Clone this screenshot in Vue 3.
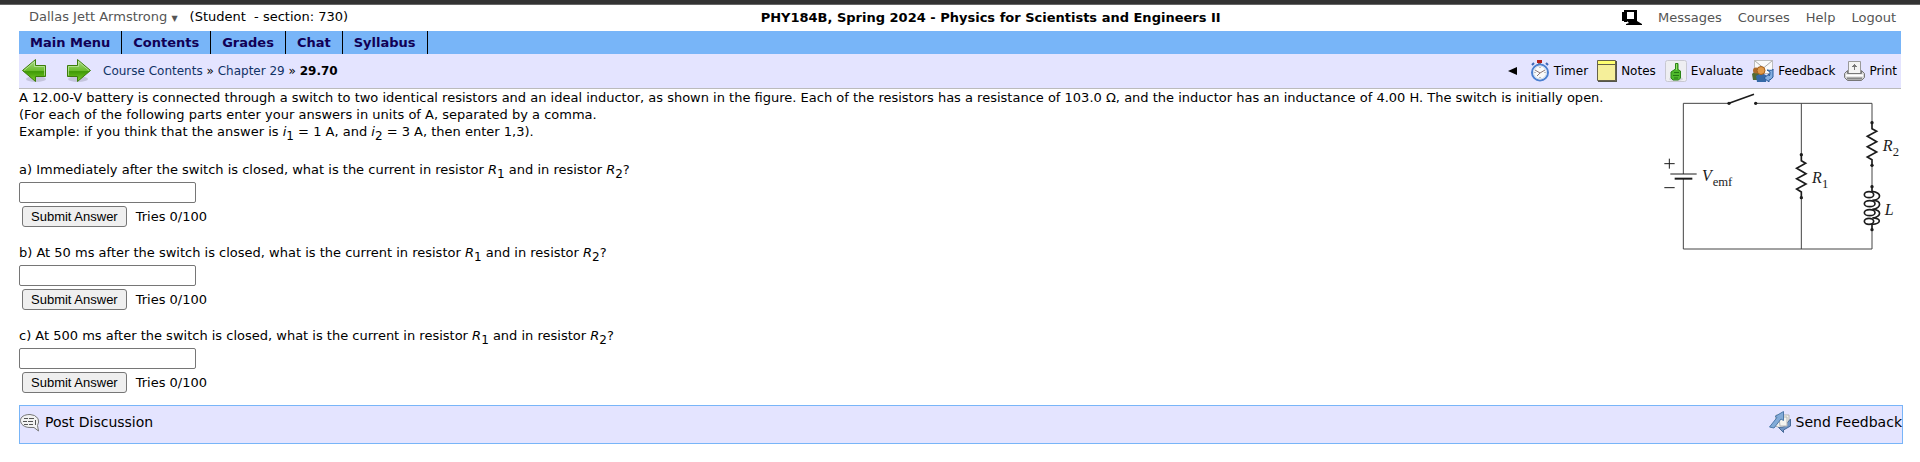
<script setup>
import { ref } from 'vue'

const menu = ['Main Menu', 'Contents', 'Grades', 'Chat', 'Syllabus']
const questions = [
  { id: 'a', lead: 'a) Immediately after the switch is closed, what is the current in resistor' },
  { id: 'b', lead: 'b) At 50 ms after the switch is closed, what is the current in resistor' },
  { id: 'c', lead: 'c) At 500 ms after the switch is closed, what is the current in resistor' }
]
const answers = ref({ a: '', b: '', c: '' })
</script>

<template>
  <div class="page">
    <header class="top">
      <div class="user">
        <a href="#" class="muted">Dallas Jett Armstrong <span class="caret">▼</span></a>
        <span>(Student &nbsp;- section: 730)</span>
      </div>
      <h1>PHY184B, Spring 2024 - Physics for Scientists and Engineers II</h1>
      <nav class="account">
        <svg width="20" height="15" viewBox="0 0 20 15" aria-hidden="true">
          <path d="M0 2h2v9H0zM2 0h13v11H2z" />
          <path d="M5 2h7v7H5z" fill="#fff" />
          <path d="M5 11h10l5 3v1H4v-1l3-1z" />
          <path d="M2 11h3v1H2zM8 10h2v1H8z" />
        </svg>
        <a href="#">Messages</a>
        <a href="#">Courses</a>
        <a href="#">Help</a>
        <a href="#">Logout</a>
      </nav>
    </header>

    <nav class="menu">
      <a v-for="m in menu" :key="m" href="#">{{ m }}</a>
    </nav>

    <div class="crumbs">
      <a href="#" class="arrow" aria-label="Previous">
        <svg width="26" height="26" viewBox="0 0 26 26">
          <defs>
            <linearGradient id="green" x1="0" y1="0" x2="0" y2="1">
              <stop offset="0" stop-color="#a9d98a" />
              <stop offset=".5" stop-color="#6cbd2e" />
              <stop offset=".55" stop-color="#3f9a06" />
              <stop offset="1" stop-color="#7bd02c" />
            </linearGradient>
          </defs>
          <ellipse cx="15" cy="21" rx="10" ry="3" fill="#c4c4dc" />
          <path d="M1.500 12.500L14.500 1.500V7.500H24.500V18.500H14.500V23.500Z" fill="url(#green)" stroke="#3b7d0a" />
          <path d="M3 12.500L13.500 3.500V8.500H23.500V17.500" fill="none" stroke="#c3e8a8" opacity=".7" />
        </svg>
      </a>
      <a href="#" class="arrow" aria-label="Next">
        <svg width="26" height="26" viewBox="0 0 26 26">
          <ellipse cx="12" cy="21" rx="10" ry="3" fill="#c4c4dc" />
          <path d="M24.500 12.500L11.500 1.500V7.500H1.500V18.500H11.500V23.500Z" fill="url(#green)" stroke="#3b7d0a" />
          <path d="M2.500 17.500V8.500H12.500V3.500L23 12.500" fill="none" stroke="#c3e8a8" opacity=".7" />
        </svg>
      </a>
      <div class="trail">
        <a href="#">Course Contents</a> » <a href="#">Chapter 29</a> » <b>29.70</b>
      </div>
      <div class="tools">
        <a href="#" class="collapse" aria-label="Collapse">
          <svg width="10" height="8" viewBox="0 0 10 8"><path d="M0 4L9 0V8Z" /></svg>
        </a>
        <a href="#">
          <svg width="20" height="22" viewBox="0 0 20 22">
            <path d="M7 0h5v3H7z" fill="#b3201c" />
            <path d="M8 3h3v2H8z" fill="#777" />
            <path d="M2 5l2-2M18 5l-2-2" stroke="#3e67b5" stroke-width="2" />
            <circle cx="10" cy="12.500" r="8" fill="#fafafa" stroke="#4b7fd0" stroke-width="2" />
            <circle cx="10" cy="12.500" r="6.500" fill="none" stroke="#c9d8ee" />
            <path d="M5 10l5 3 5-3M10 13l-3 3" fill="none" stroke="#8d7777" />
            <path d="M10 7v1M10 17v1M4.500 12.500h1M14.500 12.500h1" stroke="#888" />
          </svg>Timer</a>
        <a href="#">
          <svg width="20" height="22" viewBox="0 0 20 22">
            <path d="M1 1h19v21H1z" fill="#55554a" />
            <path d="M.5.5h18v20H.5z" fill="#f5ef9a" stroke="#66624a" />
            <path d="M1 1h17v3H1z" fill="#ffff70" />
            <path d="M1 4.500h17" stroke="#66624a" />
          </svg>Notes</a>
        <a href="#">
          <svg width="22" height="22" viewBox="0 0 22 22">
            <rect x=".5" y=".5" width="21" height="21" rx="2" fill="#eeeef2" stroke="#c8c8d2" />
            <ellipse cx="11" cy="19" rx="7" ry="2" fill="#d4d4dc" />
            <path d="M10.500 3.500h2.500v6l2.500 1.500v7l-2 2H8l-2-2v-6l4.500-3z" fill="#4eb82c" stroke="#2b8516" />
            <path d="M9 12.500h5M8 15.500h6M9 18h4" stroke="#247812" />
            <path d="M11.500 4v6" stroke="#96df68" />
          </svg>Evaluate</a>
        <a href="#">
          <svg width="22" height="22" viewBox="0 0 22 22">
            <path d="M2.500.5h18v13h-18z" fill="#fafafa" stroke="#bdbdbd" />
            <path d="M2.500.5L11.500 8l9-7.500" fill="none" stroke="#aaa" />
            <path d="M0 14q3-4 7 0v6H1z" fill="#526b35" />
            <circle cx="4" cy="10.500" r="3" fill="#ae6b2b" />
            <path d="M4 16q6-5 11 0l-1 6H5z" fill="#3569a7" />
            <circle cx="9" cy="10.500" r="4" fill="#e09a48" stroke="#a45f1b" />
            <path d="M15 10q6 1 6-1v8q-2 3-4 3v2l-5-4 5-4v2q1 0 1-4z" fill="#84aee0" stroke="#275b9a" />
          </svg>Feedback</a>
        <a href="#">
          <svg width="21" height="21" viewBox="0 0 21 21">
            <path d="M4.500.5h12v12h-12z" fill="#f3f3f3" stroke="#999" />
            <path d="M10.500 3v6M8 5.500h5M9 4.500h3" stroke="#777" />
            <path d="M3.500 9.500L.5 12.500v4l3 3h14l3-3v-4l-3-3v3h-14z" fill="#d4d4d4" stroke="#777" />
            <path d="M2 14.500h17" stroke="#fff" stroke-width="2" />
            <path d="M3 17.500h15" stroke="#888" stroke-width="2" />
          </svg>Print</a>
      </div>
    </div>

    <main class="problem">
      <div class="body">
        <p>
          A 12.00-V battery is connected through a switch to two identical resistors and an ideal inductor, as shown in the figure. Each of the resistors has a resistance of 103.0 Ω, and the inductor has an inductance of 4.00 H. The switch is initially open.<br />
          (For each of the following parts enter your answers in units of A, separated by a comma.<br />
          Example: if you think that the answer is <i>i</i><sub>1</sub> = 1 A, and <i>i</i><sub>2</sub> = 3 A, then enter 1,3).
        </p>
        <form v-for="q in questions" :key="q.id" class="question" @submit.prevent>
          <label :for="'answer-' + q.id">{{ q.lead }} <i>R</i><sub>1</sub> and in resistor <i>R</i><sub>2</sub>?</label>
          <input :id="'answer-' + q.id" v-model="answers[q.id]" type="text" />
          <div class="submit">
            <button type="submit">Submit Answer</button>
            <span>Tries 0/100</span>
          </div>
        </form>
      </div>

      <svg class="circuit" width="240" height="163" viewBox="60 12 720 489" role="img" aria-label="Circuit diagram">
        <g fill="none" stroke="#444" stroke-width="3">
          <path d="M267 55H130V267M130 281V492H696V434M347 55H696V112M484 55V208M484 338V492M696 240V304" />
        </g>
        <g fill="none" stroke="#1c1c1c" stroke-width="5">
          <path d="M267 55L342 28" />
          <path d="M91 267H170" stroke-width="3" />
          <path d="M104 281H157" stroke-width="6" />
          <path d="M73 236H104M88 221V251M73 308H104" stroke-width="3" />
          <path d="M484 206V227L497 235L470 250L498 266L470 281L498 297L470 312L484 321V341" />
          <path d="M696 110V131L710 139L682 154L710 170L682 185L710 201L682 216L696 224V244" />
          <path d="M696 302V319C726 323 726 342 697 347M697 346C726 346 726 368 697 374M697 373C726 375 726 394 697 400M697 399C725 400 725 416 696 418V438" />
          <ellipse cx="687" cy="329" rx="14" ry="9" />
          <ellipse cx="689" cy="356" rx="16" ry="9" />
          <ellipse cx="689" cy="383" rx="16" ry="9" />
          <ellipse cx="687" cy="409" rx="14" ry="9" />
        </g>
        <g fill="#1c1c1c">
          <circle cx="267" cy="55" r="5" />
          <circle cx="347" cy="55" r="5" />
          <circle cx="484" cy="209" r="5" />
          <circle cx="484" cy="338" r="5" />
          <circle cx="696" cy="113" r="5" />
          <circle cx="696" cy="241" r="5" />
          <circle cx="696" cy="305" r="5" />
          <circle cx="696" cy="434" r="5" />
        </g>
        <g class="symbols">
          <text x="186" y="287">V</text>
          <text x="218" y="302" class="sub">emf</text>
          <text x="516" y="295">R</text>
          <text x="546" y="308" class="sub">1</text>
          <text x="728" y="198">R</text>
          <text x="758" y="212" class="sub">2</text>
          <text x="734" y="390">L</text>
        </g>
      </svg>
    </main>

    <footer class="foot">
      <a href="#">
        <svg width="20" height="19" viewBox="0 0 20 19">
          <path d="M10 1.500C4 1.500.5 4 .5 7.500S4 14.500 10 14.500H14L18.500 18 17.500 12.500Q19.500 9 18 5.500Q15 1.500 10 1.500Z" fill="#f2f2f2" stroke="#777" />
          <path d="M4 5.500h4M9 5.500h5M3 8.500h4M8 8.500h5M4 11.500h4M9 11.500h4M15.500 7v5" stroke="#555" />
        </svg>Post Discussion</a>
      <a href="#">
        <svg width="22" height="22" viewBox="0 0 22 22">
          <path d="M7 4h13v11L12 17l-6-2z" fill="#f4f4ef" stroke="#b5b5b5" />
          <path d="M11 8h6v5h-6z" fill="#fff" stroke="#c4c4c4" />
          <path d="M21.500 8v7l-7 4v2.500l-5-5 5-.5z" fill="#6e94c4" stroke="#496b98" />
          <path d="M10 6h8v9h-7z" fill="#f4f4ef" stroke="#b5b5b5" />
          <path d="M.5 16L8 6.500 6 5.500 14.500.5V9.500L12 8 5 17Z" fill="#82abd8" stroke="#4d79aa" />
        </svg>Send Feedback</a>
    </footer>
  </div>
</template>

<style>
body {
  margin: 0;
  background: #fff;
}
</style>

<style scoped>
.page {
  box-sizing: border-box;
  border-top: 4px solid #333;
  padding: 0 19px;
  color: #000;
  font: 13px/17px Verdana, "DejaVu Sans", sans-serif;
  box-shadow: inset 0 1px #666;
}
a {
  color: inherit;
  text-decoration: none;
}
sub {
  font-size: 12px;
  line-height: 0;
}
.top {
  display: grid;
  grid-template-columns: 52fr auto 48fr;
  align-items: center;
  height: 27px;
  padding: 0 5px 0 10px;
}
.top h1 {
  margin: 0;
  font-size: 13px;
  line-height: 17px;
}
.user {
  display: flex;
  gap: 12px;
}
.muted,
.account {
  color: #555;
}
.caret {
  font-size: 8px;
}
.account {
  display: flex;
  justify-content: flex-end;
  align-items: center;
  gap: 16px;
}
.account svg {
  fill: #000;
}
.menu {
  display: flex;
  background: #78b5f8;
  color: #110055;
  font-weight: bold;
  line-height: 23px;
}
.menu a {
  padding: 0 11px;
  border-right: 1px solid #000;
}
.crumbs {
  display: flex;
  align-items: center;
  height: 34px;
  padding: 0 4px 0 2px;
  background: #e4e4ff;
  border-bottom: 1px solid #bbb;
  font-size: 12px;
}
.arrow {
  display: flex;
  margin-right: 19px;
}
.arrow + .trail {
  margin-left: -8px;
}
.trail {
  flex: 1;
}
.trail a {
  color: #113366;
}
.tools {
  display: flex;
  gap: 9px;
}
.tools a {
  display: flex;
  align-items: center;
  gap: 4px;
}
.tools .collapse {
  margin-right: 3px;
}
.problem {
  display: flex;
  justify-content: space-between;
  padding-right: 1px;
}
.body {
  white-space: nowrap;
}
.circuit {
  flex: none;
}
.symbols {
  font: italic 48px "Liberation Serif", serif;
  fill: #1c1c1c;
}
.symbols .sub {
  font-size: 38px;
  font-style: normal;
}
p {
  margin: 0 0 21px;
}
.question {
  display: flex;
  flex-direction: column;
  align-items: flex-start;
  margin-bottom: 17px;
}
.question:last-child {
  margin-bottom: 12px;
}
.question label {
  margin-bottom: 4px;
}
input {
  box-sizing: border-box;
  width: 177px;
  height: 21px;
  border: 1px solid #767676;
  border-radius: 2px;
  padding: 1px 2px;
  font: 13px "Liberation Sans", Arial, sans-serif;
}
.submit {
  display: flex;
  align-items: center;
  gap: 9px;
  margin: 3px 0 0 3px;
}
button {
  box-sizing: border-box;
  height: 21px;
  border: 1px solid #767676;
  border-radius: 3px;
  padding: 0 8px;
  background: #efefef;
  color: #000;
  font: 13px "Liberation Sans", Arial, sans-serif;
}
.foot {
  display: flex;
  justify-content: space-between;
  align-items: flex-start;
  box-sizing: border-box;
  height: 39px;
  margin-right: -2px;
  padding-top: 5px;
  border: 1px solid #78b5f8;
  background: #e4e4ff;
  font-size: 14px;
  line-height: 22px;
}
.foot a {
  display: flex;
  align-items: center;
  gap: 5px;
}
</style>
